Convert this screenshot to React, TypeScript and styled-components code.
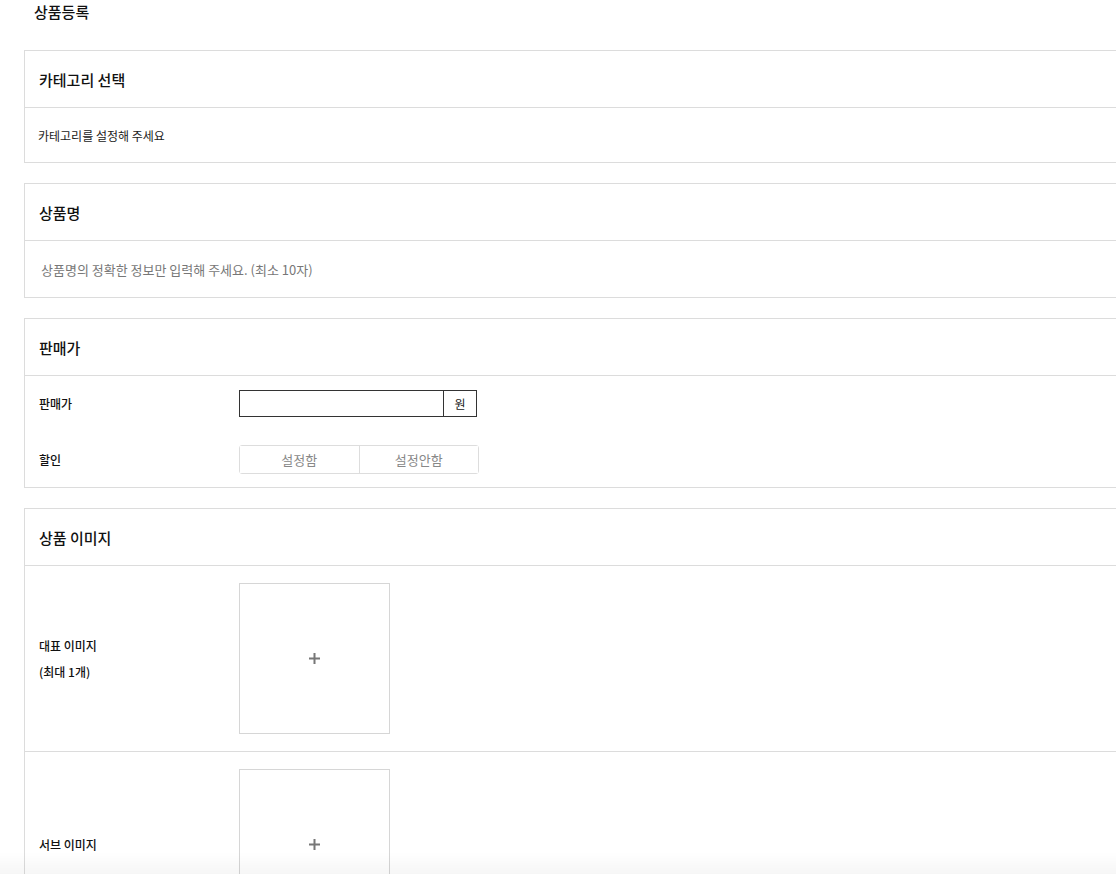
import styled, { createGlobalStyle } from "styled-components";

const GlobalStyle = createGlobalStyle`
  html, body {
    margin: 0;
    padding: 0;
    background: #fff;
    overflow-x: hidden;
  }
  body {
    font-family: "Noto Sans CJK KR", "Noto Sans", sans-serif;
    color: #222;
  }
  * { box-sizing: border-box; }
`;

const Page = styled.div`
  width: 1240px;
  padding: 0 0 40px 24px;
`;

const Title = styled.h1`
  margin: 0 0 26px 10px;
  height: 24px;
  line-height: 24px;
  font-size: 15px;
  font-weight: 500;
  color: #111;
`;

const Section = styled.section`
  border: 1px solid #dcdcdc;
  margin-bottom: 20px;
  background: #fff;
`;

const SectionHeader = styled.div`
  height: 57px;
  display: flex;
  align-items: center;
  padding: 0 14px;
  border-bottom: 1px solid #dcdcdc;
  font-size: 15px;
  font-weight: 500;
  color: #111;
`;

const CategoryBody = styled.div`
  height: 54px;
  display: flex;
  align-items: center;
  padding-left: 13px;
  font-size: 12px;
  color: #222;
`;

const NameBody = styled.div`
  height: 56px;
  display: flex;
  align-items: center;
  padding-left: 16px;
`;

const NameInput = styled.input`
  flex: 1;
  border: none;
  outline: none;
  padding: 0;
  font-family: inherit;
  font-size: 13px;
  color: #222;
  &::placeholder {
    color: #777;
  }
`;

const FormBody = styled.div`
  padding: 14px 14px 13px;
  display: flex;
  flex-direction: column;
  gap: 28px;
`;

const Row = styled.div`
  display: flex;
  align-items: center;
`;

const Label = styled.div`
  width: 200px;
  font-size: 12px;
  font-weight: 500;
  line-height: 26px;
  color: #111;
`;

const PriceInput = styled.div`
  width: 238px;
  height: 27px;
  display: flex;
  border: 1px solid #333;
`;

const PriceField = styled.input`
  flex: 1;
  border: none;
  outline: none;
  min-width: 0;
`;

const Unit = styled.div`
  width: 33px;
  border-left: 1px solid #333;
  display: flex;
  align-items: center;
  justify-content: center;
  font-size: 12px;
  color: #222;
`;

const ToggleGroup = styled.div`
  display: flex;
  width: 240px;
  height: 29px;
  border: 1px solid #ddd;
  border-radius: 3px;
`;

const ToggleButton = styled.button`
  flex: 1;
  border: none;
  background: #fff;
  font-family: inherit;
  font-size: 13px;
  color: #888;
  & + & {
    border-left: 1px solid #ddd;
  }
`;

const ImageRow = styled.div`
  display: flex;
  align-items: center;
  padding: 17px 14px 17px;
  & + & {
    border-top: 1px solid #dcdcdc;
  }
`;

const ImageBox = styled.div`
  width: 151px;
  height: 151px;
  border: 1px solid #d6d6d6;
  display: flex;
  align-items: center;
  justify-content: center;
`;

const BottomShade = styled.div`
  position: fixed;
  left: 0;
  right: 0;
  bottom: 0;
  height: 22px;
  background: linear-gradient(to bottom, rgba(0, 0, 0, 0), rgba(0, 0, 0, 0.035));
  pointer-events: none;
`;

function Plus() {
  return (
    <svg width="13" height="13" viewBox="0 0 13 13">
      <path d="M6.5 1v11M1 6.5h11" stroke="#777" strokeWidth="2" />
    </svg>
  );
}

export default function App() {
  return (
    <>
      <GlobalStyle />
      <Page>
        <Title>상품등록</Title>

        <Section>
          <SectionHeader>카테고리 선택</SectionHeader>
          <CategoryBody>카테고리를 설정해 주세요</CategoryBody>
        </Section>

        <Section>
          <SectionHeader>상품명</SectionHeader>
          <NameBody>
            <NameInput placeholder="상품명의 정확한 정보만 입력해 주세요. (최소 10자)" />
          </NameBody>
        </Section>

        <Section>
          <SectionHeader>판매가</SectionHeader>
          <FormBody>
            <Row>
              <Label>판매가</Label>
              <PriceInput>
                <PriceField />
                <Unit>원</Unit>
              </PriceInput>
            </Row>
            <Row>
              <Label>할인</Label>
              <ToggleGroup>
                <ToggleButton>설정함</ToggleButton>
                <ToggleButton>설정안함</ToggleButton>
              </ToggleGroup>
            </Row>
          </FormBody>
        </Section>

        <Section>
          <SectionHeader>상품 이미지</SectionHeader>
          <ImageRow>
            <Label>
              대표 이미지
              <br />
              (최대 1개)
            </Label>
            <ImageBox>
              <Plus />
            </ImageBox>
          </ImageRow>
          <ImageRow>
            <Label>서브 이미지</Label>
            <ImageBox>
              <Plus />
            </ImageBox>
          </ImageRow>
        </Section>
      </Page>
      <BottomShade />
    </>
  );
}
